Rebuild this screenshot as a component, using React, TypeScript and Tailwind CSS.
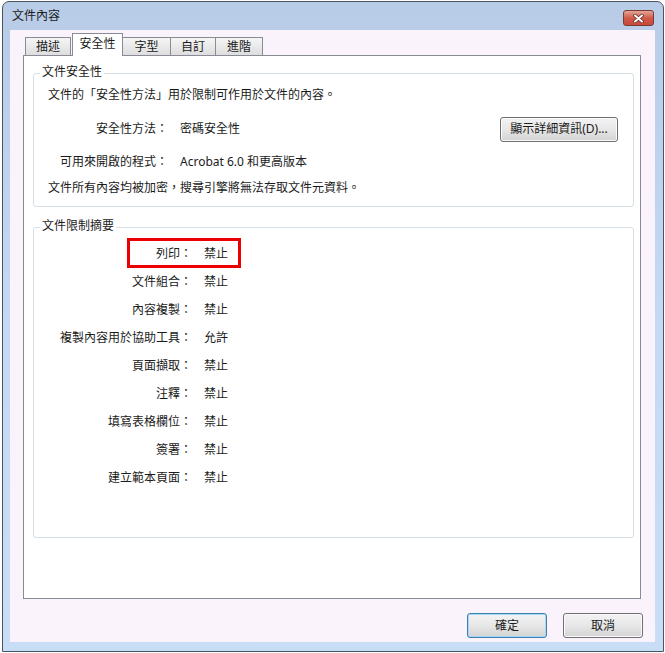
import React from "react";

const rows: [string, string][] = [
  ["列印：", "禁止"],
  ["文件組合：", "禁止"],
  ["內容複製：", "禁止"],
  ["複製內容用於協助工具：", "允許"],
  ["頁面擷取：", "禁止"],
  ["注釋：", "禁止"],
  ["填寫表格欄位：", "禁止"],
  ["簽署：", "禁止"],
  ["建立範本頁面：", "禁止"],
];

const tabs = ["描述", "安全性", "字型", "自訂", "進階"];
const tabWidths = ["w-[46px]", "w-[51px]", "w-[49px]", "w-[46px]", "w-[48px]"];

function Tab({ label, index }: { label: string; index: number }) {
  const active = index === 1;
  if (active) {
    return (
      <div className="ml-px flex h-[23px] w-[51px] justify-center border border-b-0 border-[#898c95] bg-white pt-[2px] leading-[16px]">
        {label}
      </div>
    );
  }
  return (
    <div
      className={`${tabWidths[index]} ${index > 1 ? "-ml-px" : ""} mb-px flex h-[18px] justify-center border border-b-0 border-[#898c95] bg-gradient-to-b from-[#f5f5f5] to-[#dedede] pt-px leading-[16px]`}
    >
      {label}
    </div>
  );
}

function Button({ label, primary }: { label: string; primary?: boolean }) {
  return (
    <button
      className={`flex h-[25px] w-[80px] items-center justify-center rounded-[3px] border ${
        primary
          ? "border-[#3c7fb1] shadow-[inset_0_0_0_1px_#a6d8f5]"
          : "border-[#707070] shadow-[inset_0_0_0_1px_#fbfbfb]"
      } bg-gradient-to-b from-[#f3f3f3] via-[#e7e7e7] to-[#d3d3d3] leading-[16px]`}
    >
      {label}
    </button>
  );
}

export default function App() {
  return (
    <div className="h-[653px] w-[665px] bg-white pt-px pl-[2px] font-['Noto_Sans','Noto_Sans_CJK_TC',sans-serif] text-[12px] text-[#1b1b1b]">
      <div className="flex h-[651px] w-[662px] flex-col rounded-t-[7px] border border-[#4a5560] bg-gradient-to-b from-[#b8cce7] via-[#c4d9f3] to-[#c8ddf6]">
        {/* title bar */}
        <div className="flex h-[28px] items-start">
          <span className="mt-[6px] ml-[9px] leading-[16px]">文件內容</span>
          <div className="mt-[8px] mr-[9px] ml-auto flex h-[16px] w-[31px] items-center justify-center rounded-[3px] border border-[#7a3a34] bg-gradient-to-b from-[#e3a596] via-[#cf5a4a] to-[#c8483a]">
            <svg width="11" height="9" viewBox="0 0 11 9">
              <path d="M2 1.5 L9 7.5 M9 1.5 L2 7.5" stroke="#5a2a25" strokeWidth="3.4" strokeLinecap="round" />
              <path d="M2 1.5 L9 7.5 M9 1.5 L2 7.5" stroke="#ffffff" strokeWidth="2" strokeLinecap="round" />
            </svg>
          </div>
        </div>

        {/* client area */}
        <div className="mr-[8px] ml-[7px] flex h-[612px] flex-col bg-[#fbf3fb] pt-[3px]">
          <div className="relative z-10 -mb-px flex h-[23px] items-end pl-[15px]">
            {tabs.map((t, i) => (
              <Tab key={t} label={t} index={i} />
            ))}
          </div>

          <div className="ml-[13px] flex h-[544px] w-[618px] flex-col border border-[#898c95] bg-white pr-[6px] pl-[9px]">
            <fieldset className="mt-[9px] rounded-[3px] border border-[#d5dfe5] pb-[10px]">
              <legend className="ml-[6px] px-[2px] pb-[2px] leading-[14px]">文件安全性</legend>
              <div className="mt-[6px] pl-[14px] leading-[16px]">
                文件的「安全性方法」用於限制可作用於文件的內容。
              </div>
              <div className="mt-[14px] flex h-[24px] items-center">
                <span className="w-[134px] text-right leading-[16px]">安全性方法：</span>
                <span className="ml-[12px] leading-[16px]">密碼安全性</span>
                <button className="mr-[15px] ml-auto flex h-[25px] w-[118px] items-center justify-center rounded-[3px] border border-[#707070] bg-gradient-to-b from-[#f3f3f3] via-[#e7e7e7] to-[#d3d3d3] leading-[16px] shadow-[inset_0_0_0_1px_#fbfbfb]">
                  顯示詳細資訊(D)...
                </button>
              </div>
              <div className="mt-[13px] flex leading-[16px]">
                <span className="w-[134px] text-right">可用來開啟的程式：</span>
                <span className="ml-[12px]">Acrobat 6.0 和更高版本</span>
              </div>
              <div className="mt-[10px] pl-[14px] leading-[16px]">
                文件所有內容均被加密，搜尋引擎將無法存取文件元資料。
              </div>
            </fieldset>

            <fieldset className="mt-[12px] rounded-[3px] border border-[#d5dfe5] pb-[45px]">
              <legend className="ml-[6px] px-[2px] pb-[2px] leading-[14px]">文件限制摘要</legend>
              <div className="mt-[5px] flex flex-col">
                {rows.map(([label, value], i) => (
                  <div key={label} className="relative flex h-[28px] items-center leading-[16px]">
                    <span className="w-[158px] text-right">{label}</span>
                    <span className="ml-[12px]">{value}</span>
                    {i === 0 && (
                      <span className="absolute top-[-2px] left-[93px] h-[30px] w-[114px] border-[3px] border-[#ee0000]" />
                    )}
                  </div>
                ))}
              </div>
            </fieldset>
          </div>

          <div className="mt-[14px] mr-[12px] flex justify-end gap-[16px]">
            <Button label="確定" primary />
            <Button label="取消" />
          </div>
        </div>
      </div>
    </div>
  );
}
